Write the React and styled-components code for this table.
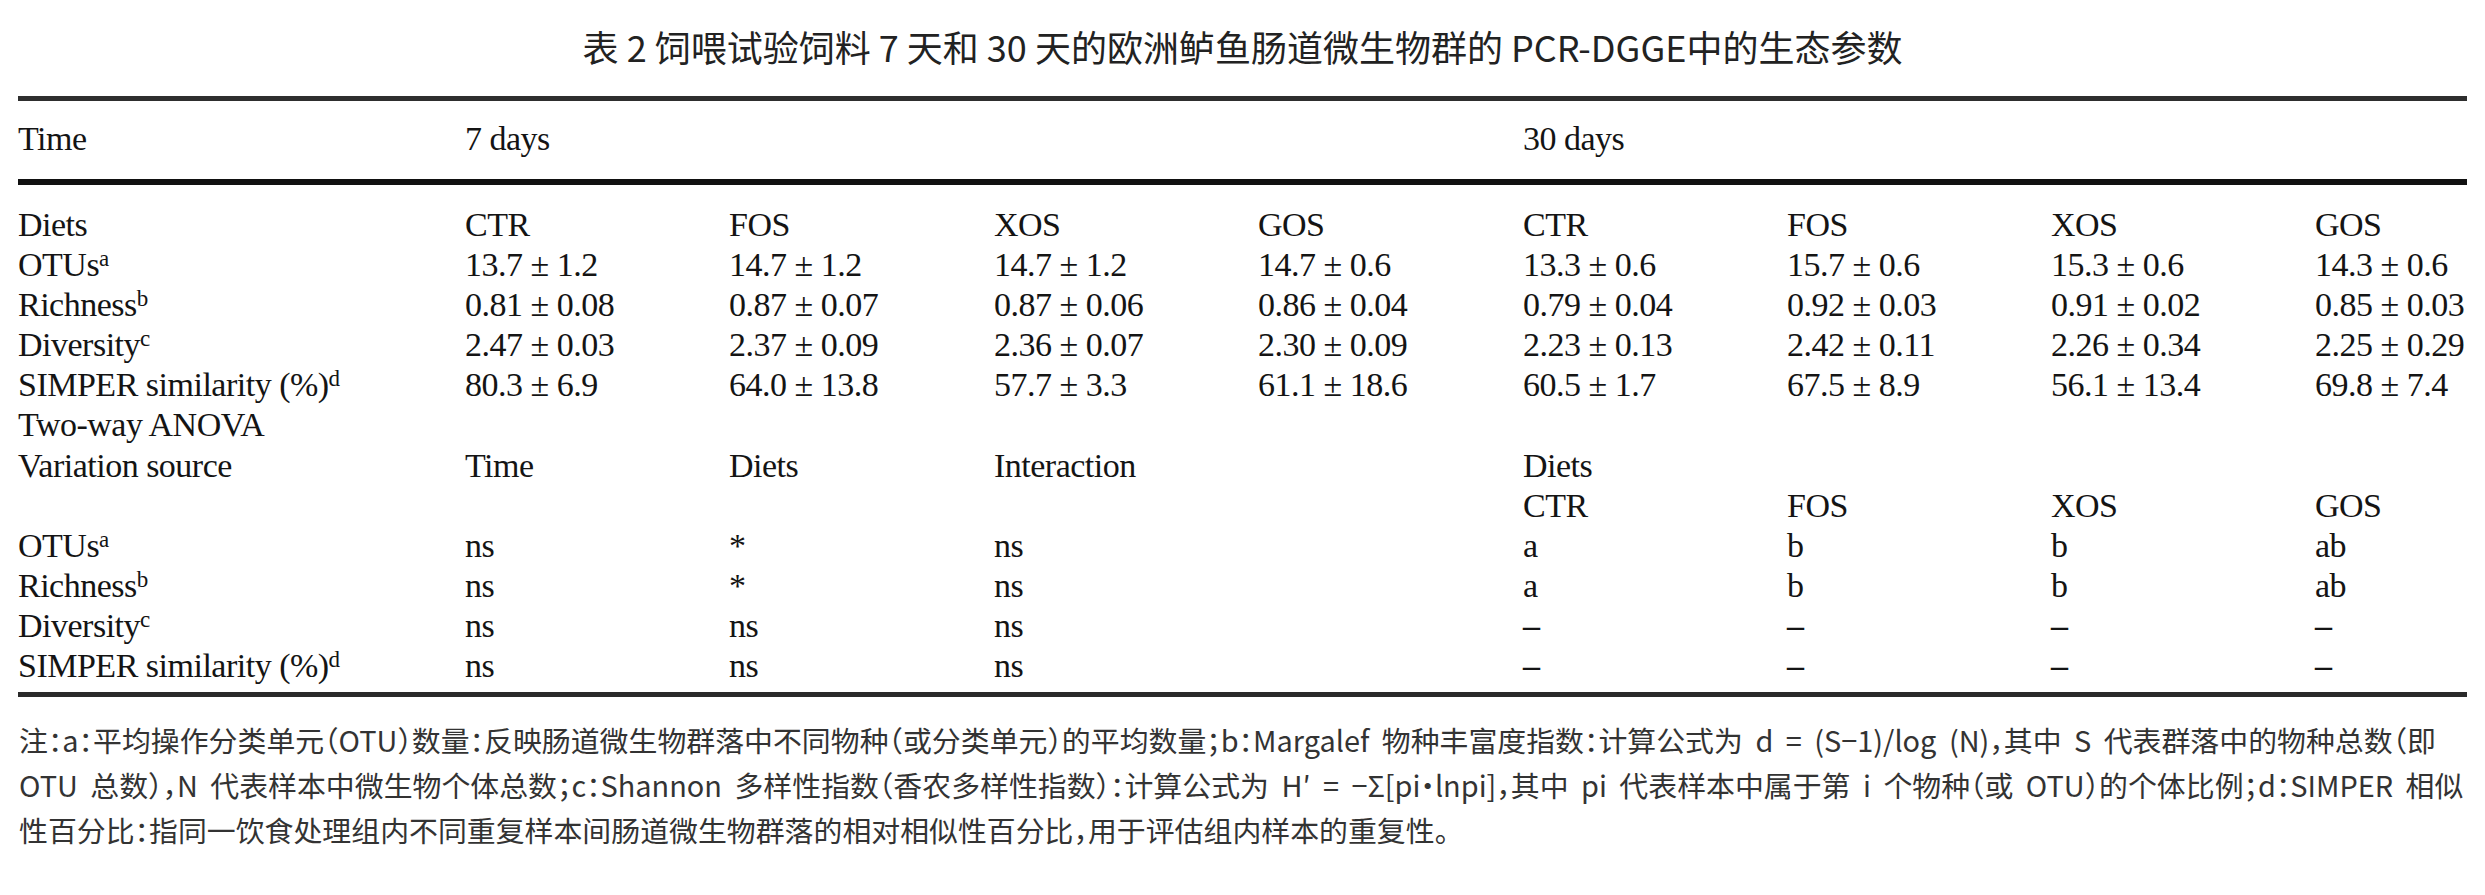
import React from "react";
import styled, { createGlobalStyle } from "styled-components";

const GlobalStyle = createGlobalStyle`
  html, body { margin: 0; padding: 0; background: #ffffff; }
  body { width: 2485px; }
`;

const Page = styled.div`
  padding: 19px 18px 0;
  box-sizing: border-box;
  width: 2485px;
`;

const Title = styled.h1`
  margin: 0 0 23px;
  text-align: center;
  font-family: "Noto Sans CJK SC", "Noto Sans", sans-serif;
  font-weight: 400;
  font-size: 36px;
  line-height: 54px;
  color: #222222;
`;

const Table = styled.table`
  width: 2449px;
  table-layout: fixed;
  border-collapse: separate;
  border-spacing: 0;
  font-family: "Liberation Serif", "Times New Roman", serif;
  font-size: 34px;
  letter-spacing: -0.5px;
  color: #141414;

  tbody tr:first-child td { padding-top: 20px; }
  tbody tr:last-child td {
    padding-bottom: 6px;
    border-bottom: 5px solid #2a2a2a;
  }
`;

const HeadCell = styled.th`
  padding: 18px 0 20px;
  line-height: 40px;
  font-weight: 400;
  text-align: left;
  vertical-align: top;
  white-space: nowrap;
  border-top: 5px solid #2e2e2e;
  border-bottom: 6px solid #111111;
`;

const Cell = styled.td`
  padding: 0;
  height: 40.1px;
  line-height: 40.1px;
  text-align: left;
  vertical-align: top;
  white-space: nowrap;
`;

const Sup = styled.span`
  font-size: 23px;
  line-height: 0;
  vertical-align: 10px;
  letter-spacing: 0;
`;

const Dash = styled.span`
  font-weight: 700;
`;

const Notes = styled.p`
  margin: 20px 0 0;
  padding-left: 1px;
  font-family: "Noto Sans CJK SC", "Noto Sans", sans-serif;
  font-size: 28.9px;
  word-spacing: 6px;
  line-height: 45px;
  color: #333333;
  font-feature-settings: "halt" 1;
  width: 2447px;
`;

const colWidths = [447, 264, 265, 264, 265, 264, 264, 264, 152];

const Label = ({ text, sup }) => (
  <>
    {text}
    {sup && <Sup>{sup}</Sup>}
  </>
);

const rows = [
  { label: "Diets", cells: ["CTR", "FOS", "XOS", "GOS", "CTR", "FOS", "XOS", "GOS"] },
  {
    label: "OTUs",
    sup: "a",
    cells: ["13.7 ± 1.2", "14.7 ± 1.2", "14.7 ± 1.2", "14.7 ± 0.6", "13.3 ± 0.6", "15.7 ± 0.6", "15.3 ± 0.6", "14.3 ± 0.6"],
  },
  {
    label: "Richness",
    sup: "b",
    cells: ["0.81 ± 0.08", "0.87 ± 0.07", "0.87 ± 0.06", "0.86 ± 0.04", "0.79 ± 0.04", "0.92 ± 0.03", "0.91 ± 0.02", "0.85 ± 0.03"],
  },
  {
    label: "Diversity",
    sup: "c",
    cells: ["2.47 ± 0.03", "2.37 ± 0.09", "2.36 ± 0.07", "2.30 ± 0.09", "2.23 ± 0.13", "2.42 ± 0.11", "2.26 ± 0.34", "2.25 ± 0.29"],
  },
  {
    label: "SIMPER similarity (%)",
    sup: "d",
    cells: ["80.3 ± 6.9", "64.0 ± 13.8", "57.7 ± 3.3", "61.1 ± 18.6", "60.5 ± 1.7", "67.5 ± 8.9", "56.1 ± 13.4", "69.8 ± 7.4"],
  },
  { label: "Two-way ANOVA", cells: ["", "", "", "", "", "", "", ""] },
  { label: "Variation source", cells: ["Time", "Diets", "Interaction", "", "Diets", "", "", ""] },
  { label: "", cells: ["", "", "", "", "CTR", "FOS", "XOS", "GOS"] },
  { label: "OTUs", sup: "a", cells: ["ns", "*", "ns", "", "a", "b", "b", "ab"] },
  { label: "Richness", sup: "b", cells: ["ns", "*", "ns", "", "a", "b", "b", "ab"] },
  { label: "Diversity", sup: "c", cells: ["ns", "ns", "ns", "", "–", "–", "–", "–"] },
  { label: "SIMPER similarity (%)", sup: "d", cells: ["ns", "ns", "ns", "", "–", "–", "–", "–"] },
];

const notesText =
  "注：a：平均操作分类单元（OTU）数量：反映肠道微生物群落中不同物种（或分类单元）的平均数量；b：Margalef 物种丰富度指数：计算公式为 d = (S−1)/log (N)，其中 S 代表群落中的物种总数（即 OTU 总数），N 代表样本中微生物个体总数；c：Shannon 多样性指数（香农多样性指数）：计算公式为 H′ = −Σ[pi•lnpi]，其中 pi 代表样本中属于第 i 个物种（或 OTU）的个体比例；d：SIMPER 相似性百分比：指同一饮食处理组内不同重复样本间肠道微生物群落的相对相似性百分比，用于评估组内样本的重复性。";

export default function App() {
  return (
    <>
      <GlobalStyle />
      <Page>
        <Title>表 2 饲喂试验饲料 7 天和 30 天的欧洲鲈鱼肠道微生物群的 PCR-DGGE中的生态参数</Title>
        <Table>
          <colgroup>
            {colWidths.map((w, i) => (
              <col key={i} style={{ width: `${w}px` }} />
            ))}
          </colgroup>
          <thead>
            <tr>
              <HeadCell>Time</HeadCell>
              <HeadCell colSpan={4}>7 days</HeadCell>
              <HeadCell colSpan={4}>30 days</HeadCell>
            </tr>
          </thead>
          <tbody>
            {rows.map((r, i) => (
              <tr key={i}>
                <Cell>
                  <Label text={r.label} sup={r.sup} />
                </Cell>
                {r.cells.map((c, j) => (
                  <Cell key={j}>{c === "–" ? <Dash>{c}</Dash> : c}</Cell>
                ))}
              </tr>
            ))}
          </tbody>
        </Table>
        <Notes>{notesText}</Notes>
      </Page>
    </>
  );
}
